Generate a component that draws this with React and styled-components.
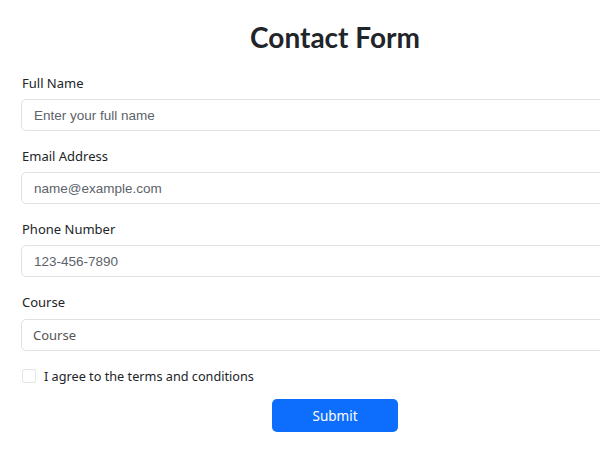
import React from 'react'
import styled, { createGlobalStyle } from 'styled-components'

const Global = createGlobalStyle`
  html, body { margin: 0; padding: 0; background: #fff; overflow: hidden; }
  body { font-family: "Noto Sans", "Liberation Sans", sans-serif; color: #212529; }
`

const Form = styled.form`
  width: 628px;
  margin-left: 21px;
  padding-top: 20px;
  display: flex;
  flex-direction: column;
`

const Title = styled.h1`
  margin: 0 0 19px;
  font-family: Lato, "Noto Sans", sans-serif;
  font-size: 28px;
  line-height: 34px;
  font-weight: 700;
  text-align: center;
  color: #212529;
`

const Group = styled.div`
  display: flex;
  flex-direction: column;
  margin-bottom: 15px;
`

const Label = styled.label`
  font-size: 13px;
  line-height: 20px;
  margin: 0 0 6px 1px;
  color: #212529;
`

const Input = styled.input`
  box-sizing: border-box;
  height: 32px;
  padding: 0 12px;
  border: 1px solid #dee2e6;
  border-radius: 5px;
  font-family: "Liberation Sans", Arial, sans-serif;
  font-size: 13.5px;
  color: #555;
  outline: none;
  &::placeholder { color: #5c636a; }
`

const Select = styled.select`
  box-sizing: border-box;
  height: 32px;
  margin-top: 1px;
  padding: 0 11px;
  border: 1px solid #dee2e6;
  border-radius: 5px;
  font-family: "Noto Sans", sans-serif;
  font-size: 13px;
  color: #555;
  background: #fff;
  appearance: none;
  outline: none;
`

const CheckRow = styled.label`
  display: flex;
  align-items: center;
  gap: 8px;
  height: 20px;
  margin: 0 0 13px 1px;
  font-size: 12.7px;
  color: #212529;
`

const Box = styled.span`
  width: 12px;
  height: 12px;
  border: 1px solid #e3e3e3;
  border-radius: 2px;
  background: #fff;
`

const Button = styled.button`
  align-self: center;
  width: 126px;
  height: 33px;
  border: none;
  border-radius: 5px;
  background: #0d6efd;
  color: #fff;
  font-family: "Noto Sans", sans-serif;
  font-size: 13.5px;
`

const fields = [
  { label: 'Full Name', placeholder: 'Enter your full name' },
  { label: 'Email Address', placeholder: 'name@example.com' },
  { label: 'Phone Number', placeholder: '123-456-7890' }
]

export default function App () {
  return (
    <>
      <Global />
      <Form onSubmit={e => e.preventDefault()}>
        <Title>Contact Form</Title>
        {fields.map(f => (
          <Group key={f.label}>
            <Label>{f.label}</Label>
            <Input placeholder={f.placeholder} />
          </Group>
        ))}
        <Group>
          <Label>Course</Label>
          <Select defaultValue=''>
            <option value=''>Course</option>
          </Select>
        </Group>
        <CheckRow>
          <Box />
          I agree to the terms and conditions
        </CheckRow>
        <Button type='submit'>Submit</Button>
      </Form>
    </>
  )
}
